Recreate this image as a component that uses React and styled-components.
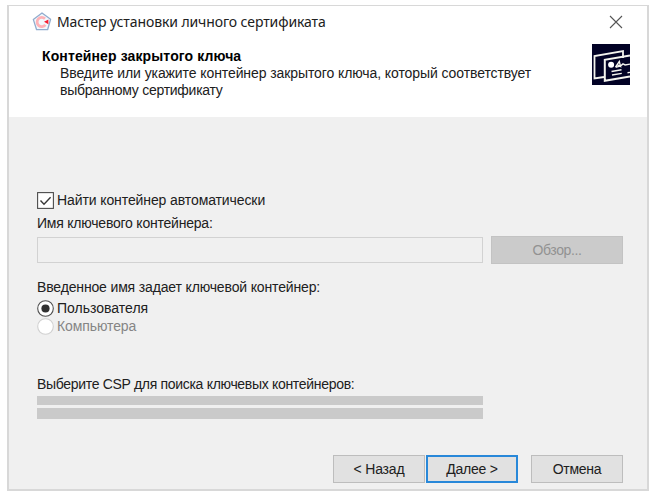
import React from 'react';
import styled, { createGlobalStyle } from 'styled-components';

const GlobalStyle = createGlobalStyle`
  * { box-sizing: border-box; }
  body { margin: 0; background: #fff; }
  button { margin: 0; }
`;

const Screen = styled.main`
  width: 656px;
  height: 500px;
  padding: 5px 7px 9px;
  overflow: hidden;
  font-family: "Liberation Sans", Arial, sans-serif;
  font-size: 14px;
  line-height: 17px;
  color: #202020;
  background: #fff;
`;

const Dialog = styled.section`
  display: flex;
  flex-direction: column;
  width: 642px;
  height: 486px;
  border: 2px solid #d8d8d8;
  border-top-width: 1px;
  background: #f0f0f0;
`;

const Header = styled.header`
  height: 111px;
  background: #fff;
`;

const TitleBar = styled.div`
  display: flex;
  align-items: center;
  height: 32px;
  padding: 0 24px 0 23px;
`;

const Title = styled.h1`
  flex: 1;
  margin: 0 0 0 5px;
  font: 400 14px/20px "Noto Sans", "Open Sans", sans-serif;
  letter-spacing: ${({ $spacing }) => $spacing}px;
  white-space: nowrap;
`;

const CloseButton = styled.button`
  display: flex;
  padding: 0;
  border: 0;
  background: none;
`;

const Intro = styled.div`
  display: flex;
  justify-content: space-between;
  padding: 6px 17px 0 33px;
`;

const IntroText = styled.div`
  padding-top: 4px;
`;

const Heading = styled.h2`
  margin: 0;
  font-size: 14px;
  line-height: 17px;
  color: #000;
  letter-spacing: ${({ $spacing }) => $spacing}px;
`;

const Line = styled.div`
  height: 17px;
  margin-left: ${({ $indent }) => $indent || 0}px;
  white-space: nowrap;
  letter-spacing: ${({ $spacing }) => $spacing}px;
`;

const Body = styled.form`
  display: flex;
  flex: 1;
  flex-direction: column;
  padding: 74px 24px 6px 28px;
`;

const Choice = styled.label`
  display: flex;
  align-items: center;
  gap: 3px;
  height: 18px;
  white-space: nowrap;
  color: ${({ $disabled }) => ($disabled ? '#858585' : '#202020')};
  letter-spacing: ${({ $spacing }) => $spacing}px;
`;

const ContainerRow = styled.div`
  display: flex;
  align-items: center;
  gap: 8px;
  margin: 4px 0 15px;
`;

const NameField = styled.input`
  width: 446px;
  height: 26px;
  border: 1px solid #d2d2d2;
  background: #f0f0f0;
`;

const Button = styled.button`
  display: flex;
  align-items: center;
  justify-content: center;
  width: ${({ $width }) => $width}px;
  height: 28px;
  padding: 0;
  border: ${({ $primary, disabled }) => ($primary ? '2px solid #2888d9' : disabled ? '1px solid #c3c3c3' : '1px solid #bdbdbd')};
  background: ${({ disabled }) => (disabled ? '#cbcbcb' : '#e1e1e1')};
  color: ${({ disabled }) => (disabled ? '#929292' : '#202020')};
  font: inherit;
  letter-spacing: ${({ $spacing }) => $spacing}px;
  white-space: nowrap;
`;

const ProviderBars = styled.div`
  display: grid;
  grid-template-rows: 9px 11px;
  gap: 3px;
  width: 446px;
  margin-top: 3px;
`;

const Bar = styled.div`
  background: #cacaca;
`;

const Gap = styled.div`
  height: ${({ $size }) => $size}px;
`;

const Footer = styled.footer`
  display: flex;
  justify-content: flex-end;
  margin-top: auto;
`;

const ButtonPair = styled.div`
  display: flex;
  gap: 1px;
  margin-right: 13px;
`;

const AppIcon = () => (
  <svg width="20" height="20" viewBox="0 0 20 20" fill="none">
    <path d="M10 1 18.6 7.3 15.6 17.7H4.6L1.3 7.4Z" fill="#f3f8fc" stroke="#91acce" strokeWidth="1.3" strokeLinejoin="round" />
    <path d="M13 6.8A4.6 4.6 0 1 0 13.4 12.8" stroke="#ffb2b7" strokeWidth="2.8" />
    <path d="M12 9.8 16.4 7.4V12.2Z" fill="#f51f32" />
  </svg>
);

const CloseIcon = () => (
  <svg width="14" height="14" viewBox="0 0 14 14">
    <path d="m1 1 12 12M13 1 1 13" stroke="#555" strokeWidth="1.1" />
  </svg>
);

const CertificateIcon = () => (
  <svg width="38" height="41" viewBox="0 0 38 41" fill="none">
    <path d="M0 0h38v41H0z" fill="#020225" />
    <path d="M31 14V7L2.5 12V34.5L12 33" stroke="#f4f4ee" strokeWidth="1.8" />
    <path d="M38 11.4 12.8 15.8V36.8L38 32.4" stroke="#f4f4ee" strokeWidth="2" />
    <circle cx="19.1" cy="20.7" r="3" fill="#fff" />
    <path d="m23.5 23.2 3.8-5.8 1.2 5-3-1.5m-2 2.4 5.2-1.5 2.3-1.9 2.1 1 4.9-.8M19.5 27.5l10-1.7M20 31l9.8-1.6M35.5 28.8l2.5-.4" stroke="#f4f4ee" strokeWidth="1.4" />
  </svg>
);

const CheckIcon = () => (
  <svg width="17" height="17" viewBox="0 0 17 17" fill="none">
    <rect x=".6" y=".6" width="15.8" height="15.8" fill="#fff" stroke="#4c4c4c" strokeWidth="1.1" />
    <path d="m3.5 8.5 3.5 3.7 6.6-7" stroke="#383838" strokeWidth="1.4" />
  </svg>
);

const RadioIcon = ({ selected }) => (
  <svg width="17" height="17" viewBox="0 0 17 17">
    <circle cx="8.5" cy="8.5" r="7.8" fill="#fff" stroke={selected ? '#505050' : '#d1d1d1'} strokeWidth="1.1" />
    {selected && <circle cx="8.5" cy="8.5" r="4.1" fill="#303030" />}
  </svg>
);

export default function App() {
  return (
    <Screen>
      <GlobalStyle />
      <Dialog>
        <Header>
          <TitleBar>
            <AppIcon />
            <Title $spacing={-0.1}>Мастер установки личного сертификата</Title>
            <CloseButton type="button" aria-label="Закрыть"><CloseIcon /></CloseButton>
          </TitleBar>
          <Intro>
            <IntroText>
              <Heading $spacing={0.12}>Контейнер закрытого ключа</Heading>
              <Line $indent={18} $spacing={-0.09}>Введите или укажите контейнер закрытого ключа, который соответствует</Line>
              <Line $indent={18} $spacing={-0.26}>выбранному сертификату</Line>
            </IntroText>
            <CertificateIcon />
          </Intro>
        </Header>
        <Body>
          <Choice $spacing={-0.1}><CheckIcon />Найти контейнер автоматически</Choice>
          <Gap $size={6} />
          <Line $spacing={-0.22}>Имя ключевого контейнера:</Line>
          <ContainerRow>
            <NameField disabled aria-label="Имя ключевого контейнера" />
            <Button type="button" disabled $width={132} $spacing={-0.4}>Обзор...</Button>
          </ContainerRow>
          <Line $spacing={-0.15}>Введенное имя задает ключевой контейнер:</Line>
          <Gap $size={3} />
          <Choice $spacing={0}><RadioIcon selected />Пользователя</Choice>
          <Choice $disabled $spacing={-0.1}><RadioIcon />Компьютера</Choice>
          <Gap $size={41} />
          <Line $spacing={-0.31}>Выберите CSP для поиска ключевых контейнеров:</Line>
          <ProviderBars><Bar /><Bar /></ProviderBars>
          <Footer>
            <ButtonPair>
              <Button type="button" $width={92} $spacing={-0.2}>&lt; Назад</Button>
              <Button type="button" $primary $width={92} $spacing={-0.2}>Далее &gt;</Button>
            </ButtonPair>
            <Button type="button" $width={92} $spacing={-0.25}>Отмена</Button>
          </Footer>
        </Body>
      </Dialog>
    </Screen>
  );
}
